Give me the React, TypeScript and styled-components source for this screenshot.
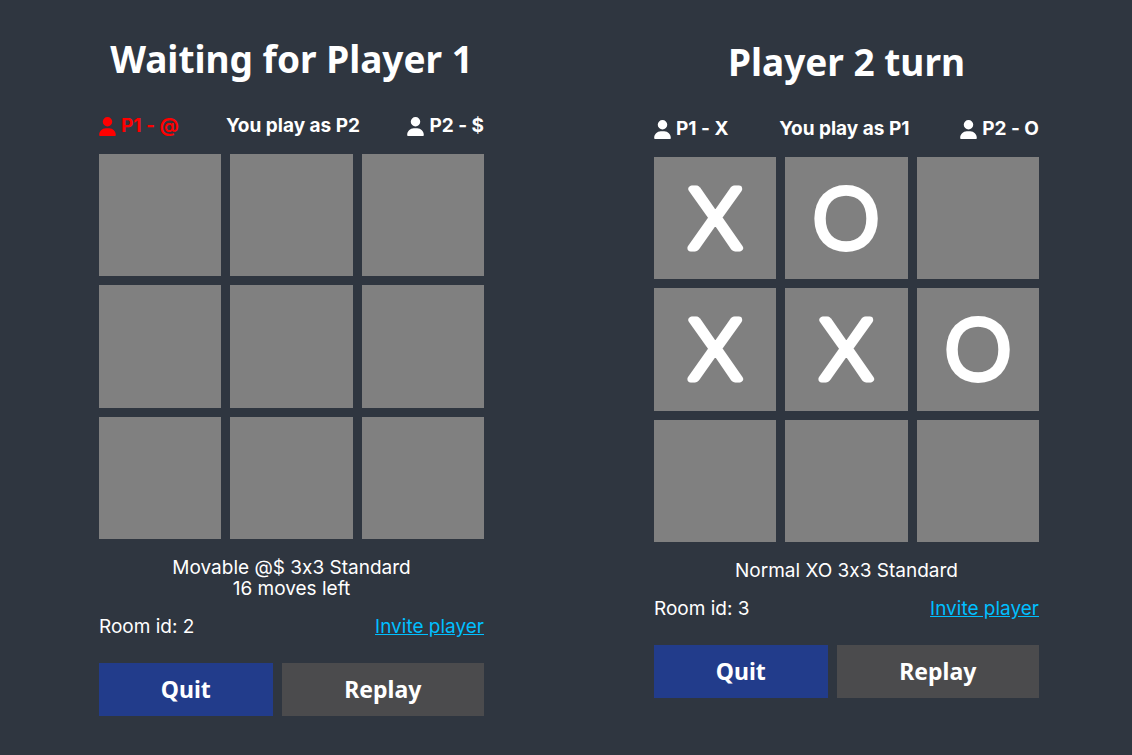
import React from "react";
import styled, { createGlobalStyle } from "styled-components";
import { FaUser } from "react-icons/fa6";

const GlobalStyle = createGlobalStyle`
  *, *::before, *::after { box-sizing: border-box; }
  body {
    margin: 0;
    background: #2f3640;
    color: #fff;
    font-family: Inter, sans-serif;
    font-size: 19px;
    font-feature-settings: "calt" 0;
    line-height: 21px;
  }
`;

const headingFont = `"Noto Sans", sans-serif`;

const Page = styled.main`
  display: grid;
  grid-template-columns: 1fr 1fr;
  align-items: start;
  gap: 170px;
  padding: 35px 93px 39px 99px;
`;

const Game = styled.section<{ $lowered?: boolean }>`
  display: flex;
  flex-direction: column;
  min-width: 0;
  padding-top: ${(p) => (p.$lowered ? 3 : 0)}px;
`;

const Title = styled.h1`
  margin: 0 0 31px;
  font-family: ${headingFont};
  font-size: 37px;
  font-weight: 700;
  line-height: 48px;
  text-align: center;
  white-space: nowrap;
`;

const Players = styled.div`
  display: flex;
  align-items: center;
  justify-content: space-between;
  margin-bottom: 16px;
  font-weight: 700;
  line-height: 24px;
  white-space: nowrap;
`;

const Player = styled.span<{ $missing?: boolean }>`
  display: flex;
  align-items: center;
  gap: 5px;
  color: ${(p) => (p.$missing ? "#ff0000" : "#fff")};
`;

const PlayerIcon = styled(FaUser)`
  width: 17px;
  height: 19px;
`;

const Board = styled.div`
  display: grid;
  grid-template-columns: repeat(3, 1fr);
  gap: 9px;
`;

const Cell = styled.button`
  display: flex;
  align-items: center;
  justify-content: center;
  aspect-ratio: 1;
  padding: 0;
  border: 0;
  background: #808080;
  color: #fff;
`;

const Mark = styled.svg`
  width: 100%;
  height: 100%;

  text {
    fill: currentColor;
    stroke: currentColor;
    stroke-width: 7px;
    stroke-linejoin: round;
    font-family: Lato, sans-serif;
    font-size: 84px;
    font-weight: 300;
    text-anchor: middle;
  }
`;

const Details = styled.p`
  margin: 18px 0 17px;
  text-align: center;
`;

const Line = styled.span`
  display: block;
`;

const Room = styled.div`
  display: flex;
  justify-content: space-between;
  margin-bottom: 26px;
`;

const Invite = styled.a`
  color: #00bfff;
  text-decoration: underline;
`;

const Actions = styled.div`
  display: flex;
  gap: 9px;
`;

const Action = styled.button<{ $primary?: boolean }>`
  flex: ${(p) => (p.$primary ? 6 : 7)} 1 0;
  height: 53px;
  padding: 0 0 2px;
  border: 0;
  background: ${(p) => (p.$primary ? "#223c8b" : "#4b4b4d")};
  color: #fff;
  font-family: ${headingFont};
  font-size: 23px;
  font-weight: 700;
`;

interface GameProps {
  title: string;
  symbols: [string, string];
  you: string;
  missing?: boolean;
  cells: string[];
  details: string[];
  room: number;
  lowered?: boolean;
}

function GamePanel({ title, symbols, you, missing, cells, details, room, lowered }: GameProps) {
  return (
    <Game $lowered={lowered}>
      <Title>{title}</Title>
      <Players>
        <Player $missing={missing}>
          <PlayerIcon aria-hidden />
          P1 - {symbols[0]}
        </Player>
        <span>You play as {you}</span>
        <Player>
          <PlayerIcon aria-hidden />
          P2 - {symbols[1]}
        </Player>
      </Players>
      <Board>
        {cells.map((mark, i) => (
          <Cell key={i} type="button" aria-label={`Cell ${i + 1}`}>
            {mark && (
              <Mark viewBox="0 0 123 123">
                <text x="61.5" y="91">{mark}</text>
              </Mark>
            )}
          </Cell>
        ))}
      </Board>
      <Details>
        {details.map((line) => (
          <Line key={line}>{line}</Line>
        ))}
      </Details>
      <Room>
        <span>Room id: {room}</span>
        <Invite href="#invite">Invite player</Invite>
      </Room>
      <Actions>
        <Action type="button" $primary>Quit</Action>
        <Action type="button">Replay</Action>
      </Actions>
    </Game>
  );
}

export default function App() {
  return (
    <>
      <GlobalStyle />
      <Page>
        <GamePanel
          title="Waiting for Player 1"
          symbols={["@", "$"]}
          you="P2"
          missing
          cells={["", "", "", "", "", "", "", "", ""]}
          details={["Movable @$ 3x3 Standard", "16 moves left"]}
          room={2}
        />
        <GamePanel
          title="Player 2 turn"
          symbols={["X", "O"]}
          you="P1"
          cells={["X", "O", "", "X", "X", "O", "", "", ""]}
          details={["Normal XO 3x3 Standard"]}
          room={3}
          lowered
        />
      </Page>
    </>
  );
}
